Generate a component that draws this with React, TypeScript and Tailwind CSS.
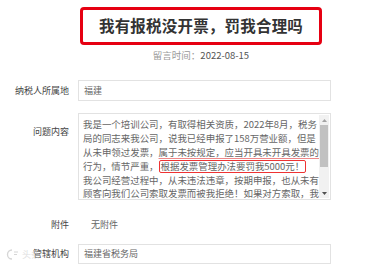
import React from "react";

const font = { fontFamily: '"Noto Sans CJK SC", "Noto Sans", sans-serif' };

export default function App() {
  return (
    <div className="relative w-[366px] h-[265px] overflow-hidden bg-white text-[#333]" style={font}>
      {/* Title */}
      <div className="pt-[7px] pl-[80px]">
        <div className="w-[242px] h-[38px] border-[3px] border-[#e60012] rounded-[4px] flex items-center justify-center">
          <span className="text-[15.5px] font-bold text-[#333] leading-none tracking-[0.2px]">我有报税没开票，罚我合理吗</span>
        </div>
      </div>
      <div className="pl-[80px] w-[322px]">
        <div className="w-[242px] text-center text-[9.5px] leading-[20px] text-[#999]">
          留言时间：<span className="text-[#555]">2022-08-15</span>
        </div>
      </div>

      {/* Form */}
      <div className="mt-[15px] flex flex-col">
        <div className="flex items-center">
          <div className="w-[69px] text-right text-[9px] text-[#444]">纳税人所属地</div>
          <div className="ml-[9px] w-[253px] h-[21px] border border-[#e2e2e2] flex items-center pl-[5px] text-[9px] text-[#666]">福建</div>
        </div>

        <div className="flex items-start mt-[12px]">
          <div className="w-[69px] text-right text-[9px] text-[#444] mt-[12px]">问题内容</div>
          <div className="ml-[9px] w-[253px] h-[87px] border border-[#e2e2e2] flex overflow-hidden">
            <div className="flex-1 pl-[4px] pt-[3px] text-[9.45px] leading-[14px] text-[#666] whitespace-nowrap overflow-hidden">
              <div>我是一个培训公司，有取得相关资质，2022年8月，税务</div>
              <div>局的同志来我公司，说我已经申报了158万营业额，但是</div>
              <div>
                从未申领过发票，<span className="underline decoration-[#e88] underline-offset-[2px]">属于未按规定，应当开具未开具发票的</span>
              </div>
              <div>
                行为，情节严重，<span className="border border-[#e33] rounded-[2px] px-[1px] leading-[11px] inline-block">根据发票管理办法要罚我5000元！</span>
              </div>
              <div>我公司经营过程中，从未违法违章，按期申报，也从未有</div>
              <div className="leading-[12px]">顾客向我们公司索取发票而被我拒绝！如果对方索取，我</div>
            </div>
            <div className="w-[10px] mr-[1px] my-[1px] bg-[#f1f1f1] flex flex-col items-center">
              <div className="h-[10px] flex items-center justify-center">
                <svg width="5" height="3" viewBox="0 0 5 3"><path d="M0 3 L2.5 0 L5 3 Z" fill="#a3a3a3" /></svg>
              </div>
              <div className="w-[8px] h-[42px] bg-[#c1c1c1]" />
              <div className="flex-1" />
              <div className="h-[10px] flex items-center justify-center">
                <svg width="5" height="3" viewBox="0 0 5 3"><path d="M0 0 L2.5 3 L5 0 Z" fill="#505050" /></svg>
              </div>
            </div>
          </div>
        </div>

        <div className="flex items-center mt-[15px] h-[20px]">
          <div className="w-[69px] text-right text-[9px] text-[#444]">附件</div>
          <div className="ml-[22px] text-[9px] text-[#666]">无附件</div>
        </div>

        <div className="flex items-center mt-[9px]">
          <div className="w-[69px] text-right text-[9px] text-[#444]">管辖机构</div>
          <div className="ml-[9px] w-[253px] h-[20px] border border-[#e2e2e2] flex items-center pl-[5px] text-[9px] text-[#666]">福建省税务局</div>
        </div>
      </div>

      {/* Watermark */}
      <div className="absolute left-[6px] top-[248px] flex items-center gap-[2px] opacity-60">
        <svg width="14" height="11" viewBox="0 0 14 11">
          <path d="M6 1 A4.5 4.5 0 1 0 6 10" fill="none" stroke="#bbb" strokeWidth="1.3" />
          <path d="M8 3 L12 3 M8 5.5 L11 5.5" stroke="#bbb" strokeWidth="1" />
        </svg>
        <span className="text-[9px] text-[#ccc]">头条</span>
      </div>
    </div>
  );
}
